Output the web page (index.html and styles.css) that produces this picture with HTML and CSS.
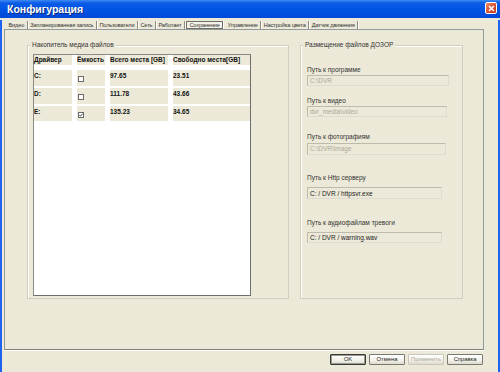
FILE: index.html
```html
<!DOCTYPE html>
<html lang="ru">

<head>
    <meta charset="UTF-8">
    <meta name="viewport" content="width=device-width, initial-scale=1.0">
    <title>Конфигурация</title>

    <link rel="stylesheet" href="styles.css">
</head>

<body>
    <div class="titlebar">
        <span class="title">Конфигурация</span>
        <span class="close">
            <svg width="7" height="7" viewBox="0 0 7 7">
                <path d="M1 1 L6 6 M6 1 L1 6" stroke="#fff" stroke-width="1.6" fill="none" />
            </svg>
        </span>
    </div>

    <div class="frame">
        <!-- tabs -->
        <div class="tabs">
            <span class="tab">Видео</span>
            <span class="tab">Запланированная запись</span>
            <span class="tab">Пользователи</span>
            <span class="tab">Сеть</span>
            <span class="tab">Работает</span>
            <span class="tab active">Сохранение</span>
            <span class="tab">Управление</span>
            <span class="tab">Настройка цвета</span>
            <span class="tab">Датчик движения</span>
        </div>

        <div class="panel">
            <!-- drives -->
            <div class="group media">
                <span class="group-title">Накопитель медиа файлов</span>
                <div class="drives">
                    <div class="cell head">Драйвер</div>
                    <div class="cell head">Ёмкость</div>
                    <div class="cell head">Всего места [GB]</div>
                    <div class="cell head">Свободно места[GB]</div>

                    <div class="cell">C:</div>
                    <div class="cell"><span class="check"></span></div>
                    <div class="cell">97.65</div>
                    <div class="cell">23.51</div>

                    <div class="cell">D:</div>
                    <div class="cell"><span class="check"></span></div>
                    <div class="cell">111.78</div>
                    <div class="cell">43.66</div>

                    <div class="cell">E:</div>
                    <div class="cell">
                        <span class="check">
                            <svg width="4" height="4" viewBox="0 0 4 4">
                                <path d="M0.3 1.8 L1.5 3.2 L3.7 0.6" stroke="#333" stroke-width="0.9" fill="none" />
                            </svg>
                        </span>
                    </div>
                    <div class="cell">135.23</div>
                    <div class="cell">34.65</div>
                </div>
            </div>

            <!-- paths -->
            <div class="group paths">
                <span class="group-title">Размещение файлов ДОЗОР</span>

                <div class="field">
                    <div class="label">Путь к программе</div>
                    <div class="input disabled">C:\DVR</div>
                </div>
                <div class="field">
                    <div class="label">Путь к видео</div>
                    <div class="input disabled">dvr_media\video</div>
                </div>
                <div class="field">
                    <div class="label">Путь к фотографиям</div>
                    <div class="input disabled">C:\DVR\image</div>
                </div>
                <div class="field">
                    <div class="label">Путь к Http серверу</div>
                    <div class="input">C: / DVR / httpsvr.exe</div>
                </div>
                <div class="field">
                    <div class="label">Путь к аудиофайлам тревоги</div>
                    <div class="input">C: / DVR / warning.wav</div>
                </div>
            </div>
        </div>

        <div class="buttons">
            <button class="btn default">OK</button>
            <button class="btn">Отмена</button>
            <button class="btn" disabled>Применить</button>
            <button class="btn">Справка</button>
        </div>
    </div>
</body>

</html>
```

FILE: styles.css
```css
* {
    box-sizing: border-box;
    font-family: "Liberation Sans", Arial, sans-serif;
}

body {
    margin: 0;
    width: 500px;
    height: 372px;
    overflow: hidden;
    background-color: #ece9d8;
    font-size: 6.5px;
    color: #000;
}

.titlebar {
    height: 18px;
    display: flex;
    align-items: center;
    justify-content: space-between;
    padding: 0 3px 0 7px;
    background: linear-gradient(#3f8cf3 0, #0c5ce6 3px, #0055e5 50%, #0049d8 100%);
}

.title {
    color: white;
    font-weight: bold;
    font-size: 10.5px;
    text-shadow: 1px 1px 0 #0a2a80;
}

.close {
    width: 12px;
    height: 12px;
    margin-top: -2px;
    display: flex;
    align-items: center;
    justify-content: center;
    border: 1px solid #fff;
    border-radius: 2px;
    background: linear-gradient(135deg, #f0906a, #d8482a 60%, #c33a1c);
}

.frame {
    height: 354px;
    border-left: 2px solid #1d63ef;
    border-right: 2px solid #1d63ef;
}

/* tabs */
.tabs {
    display: flex;
    height: 9px;
    margin-top: 2px;
    padding-left: 4px;
}

.tab {
    display: flex;
    align-items: center;
    padding: 0 2.5px;
    border-right: 1px solid #8e8c80;
    box-shadow: 1px 0 0 #fff;
    font-size: 5.6px;
    letter-spacing: -0.12px;
    line-height: 7px;
    height: 8px;
    margin-top: 1px;
    color: #333;
}

.tab.active {
    border: 1px solid #6f6d64;
    margin-left: 1px;
    margin-right: 2px;
    background-color: #f4f2e8;
}

.panel {
    display: flex;
    gap: 11px;
    width: 480px;
    height: 321px;
    margin-left: 2px;
    padding: 15px 0 0 22px;
    border: 1px solid #919b9c;
    border-bottom-color: #808078;
    box-shadow: 0 1px 0 #fff;
}

.group {
    position: relative;
    height: 254px;
    border: 1px solid #d0cebf;
    box-shadow: inset 1px 1px 0 #fff;
}

.group-title {
    position: absolute;
    top: -5px;
    left: 2px;
    padding: 0 2px;
    line-height: 8px;
    background-color: #ece9d8;
    color: #333;
}

.media {
    width: 262px;
    padding: 8px 0 0 5px;
}

.paths {
    width: 163px;
    padding: 0 0 0 6px;
}

/* drives table */
.drives {
    width: 218px;
    height: 242px;
    display: grid;
    grid-template-columns: 38px 28px 58px 1fr;
    grid-template-rows: 13px 16px 16px 15px;
    column-gap: 5px;
    row-gap: 2px;
    align-content: start;
    background-color: #fff;
    border: 1px solid #8a8a86;
    border-right-color: #6e6e6a;
    border-bottom-color: #6e6e6a;
}

.cell {
    background-color: #ece9d8;
    font-weight: bold;
    font-size: 6.5px;
    line-height: 8px;
    padding-top: 2px;
    color: #111;
}

.cell.head {
    margin-bottom: 3px;
    padding-top: 1px;
}

.check {
    display: flex;
    align-items: center;
    justify-content: center;
    width: 6px;
    height: 6px;
    margin: 4px 0 0 1px;
    border: 1px solid #6a6a6a;
    background-color: #fff;
}

/* path fields */
.label {
    line-height: 8px;
    color: #333;
}

.input {
    height: 11px;
    margin-top: 1px;
    padding-left: 2px;
    line-height: 10px;
    border: 1px solid #bdbbad;
    border-right-color: #dedcd0;
    border-bottom-color: #dedcd0;
    color: #222;
}

.input.disabled {
    color: #aca899;
}

.field:nth-of-type(1) {
    margin-top: 20px;
}

.field:nth-of-type(1) .input {
    width: 142px;
}

.field:nth-of-type(2) {
    margin-top: 11px;
}

.field:nth-of-type(2) .input {
    width: 140px;
}

.field:nth-of-type(3) {
    margin-top: 16px;
}

.field:nth-of-type(3) .input {
    width: 139px;
    height: 12px;
    margin-top: 2px;
}

.field:nth-of-type(4) {
    margin-top: 19px;
}

.field:nth-of-type(4) .input {
    width: 135px;
    height: 12px;
    margin-top: 5px;
    line-height: 11px;
}

.field:nth-of-type(5) {
    margin-top: 20px;
}

.field:nth-of-type(5) .input {
    width: 135px;
    margin-top: 5px;
}

/* bottom buttons */
.buttons {
    display: flex;
    justify-content: flex-end;
    gap: 3px;
    margin-top: 4px;
    padding-right: 15px;
}

.btn {
    width: 36px;
    height: 11px;
    padding: 0;
    font-size: 5.8px;
    line-height: 9px;
    color: #222;
    border: 1px solid #7a7a72;
    border-radius: 1px;
    background: linear-gradient(#ffffff, #f2f1ea 60%, #dcd9cc);
}

.btn.default {
    border: 1px solid #3a3a36;
    box-shadow: inset 0 0 0 1px #9a9a90;
}

.btn:disabled {
    color: #aca899;
    border-color: #c9c7ba;
}
```
